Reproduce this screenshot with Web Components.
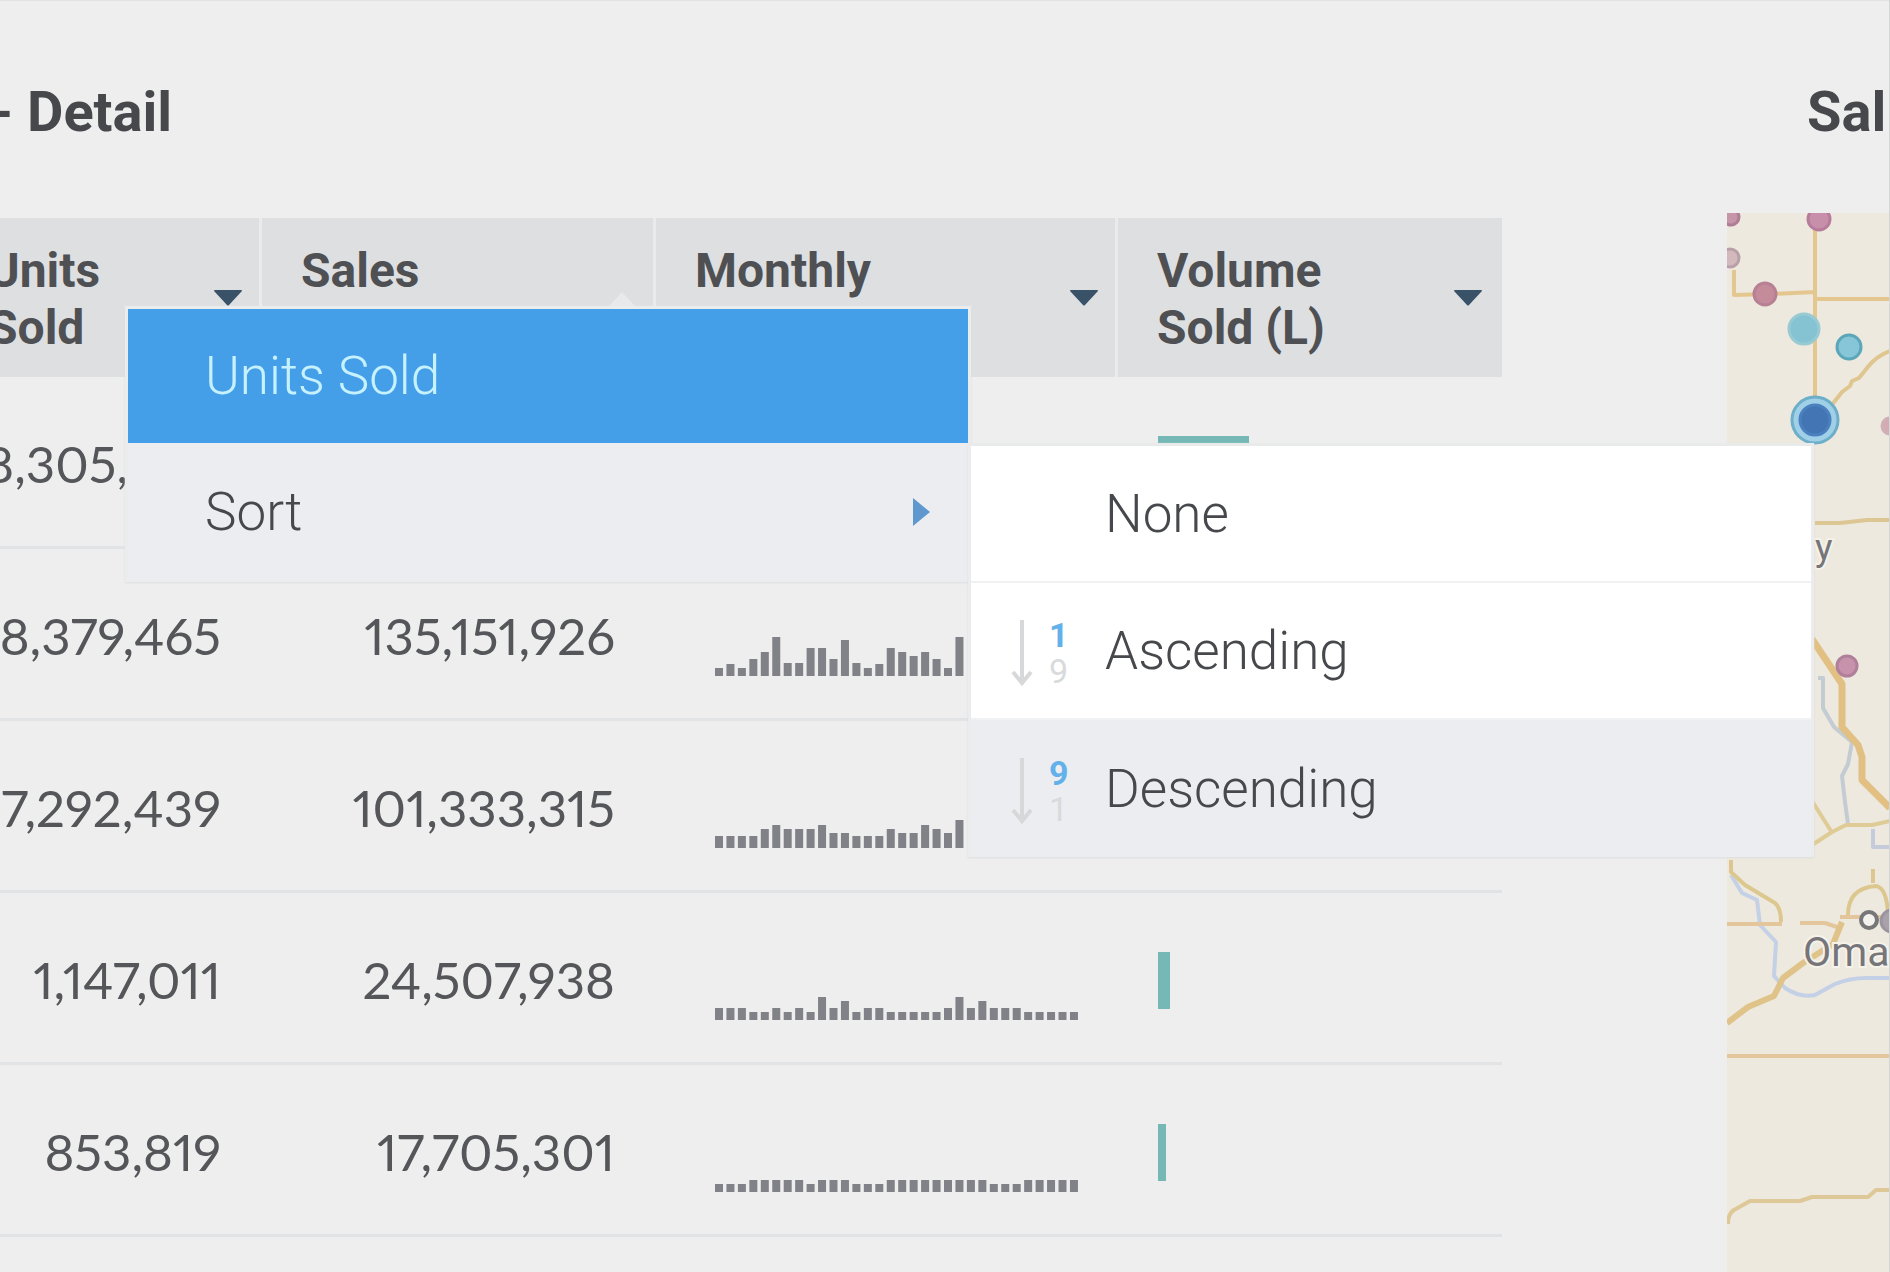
<!DOCTYPE html>
<html lang="en">
<head>
<meta charset="utf-8">
<title>Sales dashboard</title>
<style>
  html, body { margin: 0; background: #eeeeee; }
  body { min-height: 100vh; overflow: hidden; font-family: Roboto, "Liberation Sans", sans-serif; color: #4a4b4e; }
</style>
</head>
<body>
<sales-dashboard>
  <dash-panel slot="main" heading="- Detail">
    <detail-table></detail-table>
  </dash-panel>
  <dash-panel slot="side" heading="Sal">
    <sales-map></sales-map>
  </dash-panel>
  <context-menu slot="overlay">
    <menu-item tone="title">Units Sold</menu-item>
    <menu-item tone="active" submenu>Sort
      <context-menu slot="children" nested>
        <menu-item inset>None</menu-item>
        <menu-item inset><sort-icon slot="icon" first="1" second="9"></sort-icon>Ascending</menu-item>
        <menu-item inset tone="active"><sort-icon slot="icon" first="9" second="1"></sort-icon>Descending</menu-item>
      </context-menu>
    </menu-item>
  </context-menu>
</sales-dashboard>

<script>
class BaseElement extends HTMLElement {
  connectedCallback() {
    if (this.shadowRoot) return;
    this.attachShadow({ mode: "open" }).innerHTML = this.render();
  }
}

/* Two-column page with a layer for menus */
customElements.define("sales-dashboard", class extends BaseElement {
  render() {
    return `<style>
      :host { display: block; position: relative; height: 100vh; overflow: hidden; box-sizing: border-box;
        box-shadow: inset 0 1px #e0e2e4; }
      .cols { display: flex; min-height: 100%; }
      .main { flex: 1; min-width: 0; }
      .side { flex: none; width: 163px; box-sizing: border-box; overflow: hidden; border-right: 1px solid #d3d5d6; }
      .overlay { position: absolute; left: 125px; top: 306px; z-index: 2; }
    </style>
    <div class="cols">
      <main class="main"><slot name="main"></slot></main>
      <aside class="side"><slot name="side"></slot></aside>
    </div>
    <div class="overlay"><slot name="overlay"></slot></div>`;
  }
});

customElements.define("dash-panel", class extends BaseElement {
  render() {
    const side = this.slot === "side";
    return `<style>
      :host { display: block; padding-top: 80px; }
      h2 { margin: 0 0 ${side ? "69px 80px" : "74px -9px"}; font-size: 56px; line-height: 64px; font-weight: 700;
        white-space: nowrap; color: #47484b; }
    </style>
    <h2>${this.getAttribute("heading")}</h2>
    <slot></slot>`;
  }
});

/* Small column chart */
customElements.define("spark-line", class extends BaseElement {
  render() {
    const values = this.getAttribute("values").split(",").map(Number);
    const bars = values.map((h, i) =>
      `<rect x="${(i * 11.45).toFixed(2)}" y="${40 - h}" width="8" height="${h}"/>`).join("");
    return `<style>
      :host { display: block; }
      svg { display: block; fill: #818188; }
    </style>
    <svg width="364" height="40" viewBox="0 0 364 40" aria-hidden="true">${bars}</svg>`;
  }
});

customElements.define("volume-bar", class extends BaseElement {
  render() {
    return `<style>
      :host { display: block; }
      div { width: ${this.getAttribute("size")}px; height: 57px; background: #75b8b6; }
    </style><div></div>`;
  }
});

customElements.define("detail-table", class extends BaseElement {
  render() {
    const heads = [["Units<br>Sold", "down"], ["Sales", "up"], ["Monthly", "down"], ["Volume<br>Sold (L)", "down"]];
    const rows = [
      ["8,305,", "", "", 91],
      ["8,379,465", "135,151,926", "8,12,8,17,24,39,13,13,28,28,17,36,13,8,12,28,24,20,24,17,8,39", 0],
      ["7,292,439", "101,333,315", "12,12,12,12,19,23,19,19,19,23,15,15,12,12,12,19,15,15,23,19,15,28", 0],
      ["1,147,011", "24,507,938", "12,12,12,8,8,12,8,12,8,23,12,19,8,12,12,8,8,8,8,8,12,23,12,19,12,12,12,8,8,8,8,8", 12],
      ["853,819", "17,705,301", "8,8,8,12,12,12,12,12,8,12,12,12,8,8,8,12,12,12,12,12,12,12,12,12,8,8,8,12,12,12,12,12", 8]
    ];
    const arrow = dir => dir === "down"
      ? `<svg width="28" height="16" viewBox="0 0 28 16"><path d="M0 1Q0 0 1 0H27Q28 0 28 1L15 15Q14 16 13 15Z" fill="#3a5268"/></svg>`
      : `<svg width="28" height="16" viewBox="0 0 28 16"><path d="M1 16L14 2L27 16Z" fill="#e8e9ea"/></svg>`;
    const th = heads.map(([t, d]) =>
      `<th scope="col"><div class="head"><span>${t}</span><button type="button" aria-label="Column menu">${arrow(d)}</button></div></th>`).join("");
    const tr = rows.map(r => `<tr>
      <td class="num${r[0].endsWith(",") ? " cut" : ""}">${r[0]}</td>
      <td class="num">${r[1]}</td>
      <td class="spark">${r[2] ? `<spark-line values="${r[2]}"></spark-line>` : ""}</td>
      <td class="vol">${r[3] ? `<volume-bar size="${r[3]}"></volume-bar>` : ""}</td></tr>`).join("");
    return `<style>
      :host { display: block; margin: 0 225px 0 -51px; }
      table { width: 100%; table-layout: fixed; border-spacing: 0; border-collapse: separate; }
      th { padding: 0; text-align: left; background: #dedfe1; box-shadow: inset -3px 0 #eaebec; }
      th:last-child { box-shadow: none; }
      .head { display: flex; justify-content: space-between; height: 159px; box-sizing: border-box; padding: 0 20px 0 39px; }
      .head span { padding-top: 24px; font-size: 48px; line-height: 57px; font-weight: 700; color: #4f5053; }
      button { align-self: center; display: flex; margin: 0; padding: 0; border: 0; background: none; }
      td { height: 172px; padding: 5px 0 0; box-sizing: border-box; border-bottom: 3px solid #e2e3e4; }
      .num { padding-right: 41px; text-align: right; font: 400 51px/56px Lato, "Open Sans", sans-serif;
        font-variant-numeric: proportional-nums; color: #55565a; }
      .cut { padding-right: 134px; }
      .spark { padding: 0 0 42px 59px; vertical-align: bottom; }
      .vol { padding-left: 40px; }
    </style>
    <table>
      <colgroup><col style="width:313px"><col style="width:394px"><col><col style="width:384px"></colgroup>
      <thead><tr>${th}</tr></thead>
      <tbody>${tr}</tbody>
    </table>`;
  }
});

customElements.define("context-menu", class extends BaseElement {
  render() {
    return `<style>
      :host { display: block; width: 840px; border: 3px solid #ebecee; border-bottom-width: 2px;
        box-shadow: 0 1px 2px #dcdde0; background: #ffffff; }
      :host([nested]) { border-top-color: #e9eaea; border-bottom-width: 0; }
    </style><div role="menu"><slot></slot></div>`;
  }
});

customElements.define("menu-item", class extends BaseElement {
  render() {
    return `<style>
      :host { display: block; position: relative; }
      button { display: flex; align-items: center; width: 100%; height: 137px; margin: 0; box-sizing: border-box;
        padding: 0 38px 0 77px; border: 0; border-bottom: 2px solid #f0f1f2; background: #ffffff;
        font: 300 53px/64px Roboto, sans-serif; color: #46484c; text-align: left; }
      :host([inset]) button { padding-left: 40px; }
      .icon { width: 94px; height: 72px; flex: none; padding-top: 4px; box-sizing: border-box; }
      .label { flex: 1; }
      :host([tone="title"]) button { height: 134px; border-bottom: 0; background: #459fe8; color: #c6f1ff; }
      :host([tone="active"]) button { background: #ecedf0; border-bottom: 0; }
      .kids { position: absolute; left: 100%; top: 0; }
    </style>
    <button type="button" role="menuitem">
      ${this.hasAttribute("inset") ? '<span class="icon"><slot name="icon"></slot></span>' : ""}
      <span class="label"><slot></slot></span>
      ${this.hasAttribute("submenu") ? '<svg width="17" height="30" viewBox="0 0 17 30"><path d="M0 1L17 15L0 29Z" fill="#5f98cf"/></svg>' : ""}
    </button>
    <div class="kids"><slot name="children"></slot></div>`;
  }
});

customElements.define("sort-icon", class extends BaseElement {
  render() {
    return `<style>
      :host { display: flex; align-items: center; gap: 16px; height: 68px; }
      div { display: flex; flex-direction: column; font: 400 34px/36px Roboto, sans-serif; color: #d9dadc; }
      b { font-weight: 700; color: #63b1ea; }
    </style>
    <svg width="22" height="68" viewBox="0 0 22 68" fill="none" stroke="#d7d8da" stroke-width="4">
      <path d="M11 1V64M2 53L11 64L20 53"/></svg>
    <div><b>${this.getAttribute("first")}</b><span>${this.getAttribute("second")}</span></div>`;
  }
});

/* Road map drawn on its own canvas, with sales markers */
customElements.define("sales-map", class extends BaseElement {
  render() {
    return `<style>
      :host { display: block; background: #ede9de; }
      svg { display: block; }
      text { font-family: Roboto, sans-serif; fill: #76767a; stroke: #f5f2ea; stroke-width: 4px; paint-order: stroke; }
    </style>
    <svg width="163" height="1059" viewBox="1727 213 163 1059" role="img" aria-label="Sales map">
      <g fill="none" stroke="#b9bfd2" stroke-width="4" stroke-linejoin="round">
        <path d="M1818 678H1823V708L1834 727L1852 742L1848 764L1842 776L1845 802L1848 824" stroke="#c3cbd3"/>
        <path d="M1890 847H1873V829" stroke="#c6cbdc"/>
        <path d="M1731 875L1742 893L1757 900L1760 925L1776 942L1774 976L1785 988Q1800 998 1815 995L1835 984Q1850 978 1866 978H1890" stroke="#c3d0e6"/>
      </g>
      <g fill="none" stroke="#e4c78f" stroke-width="4" stroke-linejoin="round">
        <path d="M1815 213V400M1734 270V295L1770 294L1815 292M1815 299H1890"/>
        <path d="M1831 406L1842 392L1850 386L1852 381L1859 378L1867 368Q1876 356 1890 351" stroke="#dfc68f"/>
        <path d="M1815 523H1840L1867 520H1890" stroke="#dcc693"/>
        <path d="M1812 801L1831 831M1812 845L1832 832L1846 825H1872L1890 821" stroke="#dfcb96"/>
        <path d="M1731 860V872L1745 885L1775 903Q1781 908 1781 922M1873 869V883M1848 915Q1848 888 1876 886Q1887 888 1888 915" stroke="#dcc88f"/>
        <path d="M1727 924H1782M1800 923H1825L1840 928M1840 917H1890M1727 1056H1890" stroke="#e3c69c"/>
        <path d="M1728 1224Q1728 1214 1734 1210L1750 1201H1800L1812 1197H1868L1876 1190H1890" stroke="#dfc898"/>
      </g>
      <g fill="none" stroke="#e2c083" stroke-width="7" stroke-linejoin="round">
        <path d="M1812 639L1826 660L1842 684V727L1858 745L1862 757V780L1890 808"/>
        <path d="M1727 1023L1748 1007L1774 996L1783 978L1803 963L1833 944L1842 922" stroke="#dfc389" stroke-width="6"/>
      </g>
      <g stroke-width="3">
        <circle cx="1731" cy="217" r="8" fill="#c795a9" stroke="#b07d96"/>
        <circle cx="1819" cy="219" r="11" fill="#c78faa" stroke="#b77b9b"/>
        <circle cx="1730" cy="258" r="9" fill="#d3b9bb" stroke="#b99fa9"/>
        <circle cx="1765" cy="294" r="11" fill="#c48b9b" stroke="#b78095"/>
        <circle cx="1804" cy="329" r="15" fill="#86c3d2" stroke="#98cad4"/>
        <circle cx="1849" cy="347" r="12" fill="#87c6d8" stroke="#5ba7b9"/>
        <circle cx="1815" cy="420" r="23" fill="#9fd0e8" stroke="#6daec9"/>
        <circle cx="1815" cy="420" r="15" fill="#4374b4" stroke="#4b80be"/>
        <circle cx="1890" cy="426" r="8" fill="#d5abb3" stroke="#ceb0b6"/>
        <circle cx="1847" cy="666" r="10" fill="#c792ac" stroke="#b07f9a"/>
        <circle cx="1892" cy="921" r="11" fill="#a9a2ab" stroke="#9b959f"/>
        <circle cx="1869" cy="920" r="8" fill="#f4f2ec" stroke="#77777a" stroke-width="4"/>
      </g>
      <text x="1815" y="560" font-size="37">y</text>
      <text x="1803" y="966" font-size="41">Oma</text>
    </svg>`;
  }
});
</script>
</body>
</html>
